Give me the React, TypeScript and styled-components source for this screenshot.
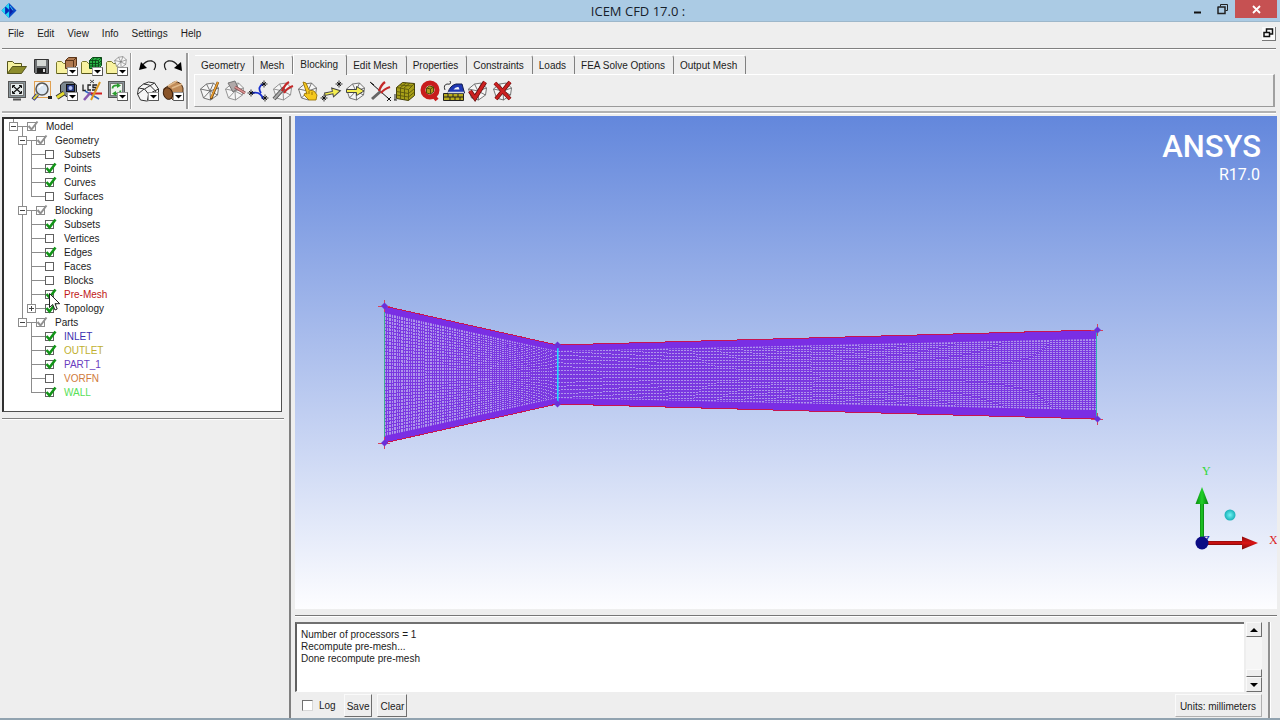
import React from 'react';
import styled, { createGlobalStyle, css } from 'styled-components';

const GlobalStyle = createGlobalStyle`
  *, *::before, *::after { box-sizing: border-box; }
  body {
    margin: 0;
    background: #eeeeee;
    color: #1c1c1c;
    font: 10px/14px "Liberation Sans", Arial, sans-serif;
  }
  button, textarea, input { font: inherit; color: inherit; margin: 0; padding: 0; }
  button { border: 0; background: none; cursor: default; }
  svg { display: block; }
`;

/* ---------- window frame ---------- */

const Window = styled.div`
  min-height: 100vh;
  display: flex;
  flex-direction: column;
  background: #eeeeee;
  border-bottom: 2px solid #91a3b0;
`;

const TitleBar = styled.header`
  height: 22px;
  flex: none;
  display: grid;
  grid-template-columns: 96px 1fr 100px;
  background: #abcbe4;
  border-bottom: 1px solid #9db7ca;
`;

const AppIcon = styled.div`
  padding: 2px 0 0 1px;
`;

const Title = styled.h1`
  margin: 0;
  text-align: center;
  font: 13px/22px "Open Sans", "Noto Sans", sans-serif;
  color: #16202a;
`;

const Caption = styled.div`
  display: flex;
  justify-content: flex-end;
  padding-right: 3px;
`;

const CaptionButton = styled.button<{ $close?: boolean }>`
  width: ${p => (p.$close ? 42 : 25)}px;
  height: 18px;
  display: grid;
  place-items: center;
  background: ${p => (p.$close ? '#c65152' : 'transparent')};
`;

const MenuBar = styled.nav`
  height: 26px;
  flex: none;
  display: flex;
  align-items: center;
  gap: 13px;
  margin: 0 4px 0 2px;
  padding: 0 0 2px 6px;
`;

const MenuButton = styled.button`
  height: 18px;
`;

const RestoreChild = styled.button`
  width: 14px;
  height: 14px;
  margin-left: auto;
  display: grid;
  place-items: center;
  background: #fafafa;
  border-right: 1px solid #777;
  border-bottom: 1px solid #777;
`;

const Rule = styled.hr<{ $soft?: boolean; $flush?: boolean }>`
  height: ${p => (p.$soft ? 3 : 2)}px;
  flex: none;
  margin: ${p => (p.$flush ? '0' : '0 4px 0 2px')};
  border: 0;
  border-top: ${p => (p.$soft ? '2px solid #b2b2b2' : '1px solid #808080')};
  background: #ffffff;
`;

/* ---------- toolbars ---------- */

const ToolArea = styled.div`
  height: 61px;
  flex: none;
  display: flex;
  padding: 3px 5px 2px 5px;
`;

const ToolGroup = styled.div<{ $columns: number }>`
  display: grid;
  grid-template-columns: repeat(${p => p.$columns}, 1fr);
  grid-template-rows: 25px 25px;
  width: ${p => (p.$columns === 5 ? 124 : 50)}px;
`;

const Divider = styled.div<{ $strong?: boolean }>`
  width: ${p => (p.$strong ? 3 : 2)}px;
  margin: 0 ${p => (p.$strong ? 5 : 3)}px 0 1px;
  border-left: ${p => (p.$strong ? 2 : 1)}px solid #9b9b9b;
  background: #ffffff;
`;

const ToolButton = styled.button`
  display: grid;
  place-items: center;
`;

const TabPanel = styled.section`
  flex: 1;
  min-width: 0;
  display: flex;
  flex-direction: column;
  padding-top: 1px;
`;

const TabStrip = styled.div`
  height: 20px;
  display: flex;
  align-items: flex-end;
  padding-left: 1px;
`;

const Tab = styled.button<{ $active?: boolean }>`
  height: ${p => (p.$active ? 21 : 19)}px;
  padding: 1px 8px 0 6px;
  white-space: nowrap;
  line-height: 18px;
  text-align: left;
  background: #eeeeee;
  border-top: 1px solid #ffffff;
  border-right: 1px solid #808080;
  border-top-right-radius: 3px;
  ${p =>
    p.$active &&
    css`
      position: relative;
      top: 1px;
      padding-bottom: 2px;
      line-height: 16px;
      border-left: 1px solid #ffffff;
    `}
`;

const TabPage = styled.div`
  height: 33px;
  border: 1px solid #ffffff;
  border-right: 2px solid #a0a0a0;
  border-bottom-color: #9a9a9a;
  padding: 4px 0 0 3px;
`;

const BlockingTools = styled.div`
  display: grid;
  grid-template-columns: repeat(13, 1fr);
  grid-auto-rows: 24px;
  width: 317px;
`;

/* ---------- model tree ---------- */

const Main = styled.main`
  flex: 1;
  display: grid;
  grid-template-columns: 282px 11px 1fr;
  padding: 2px 3px 0 2px;
`;

const LeftColumn = styled.div`
  display: flex;
  flex-direction: column;
`;

const TreePanel = styled.div`
  height: 295px;
  margin: 1px 2px 6px 0;
  padding: 0 0 0 5px;
  background: #ffffff;
  border: 2px solid #303030;
  border-right: 1px solid #505050;
  border-bottom: 1px solid #505050;
`;

const Tree = styled.ul`
  list-style: none;
  margin: 0;
  padding: 0;
`;

const TreeRow = styled.li`
  position: relative;
  height: 14px;
  display: flex;
`;

const line = '#8c8c8c';
const Guide = styled.span<{ $lines: string }>`
  position: relative;
  width: 9px;
  height: 14px;
  flex: none;
  ${p => {
    const l: string[] = [];
    const paint = (pos: string) => l.push(`linear-gradient(${line}, ${line}) ${pos} no-repeat`);
    if (p.$lines.includes('u')) paint('4px 0 / 1px 8px');
    if (p.$lines.includes('d')) paint('4px 7px / 1px 7px');
    if (p.$lines.includes('l')) paint('0 7px / 5px 1px');
    if (p.$lines.includes('r')) paint('4px 7px / 5px 1px');
    return l.length ? `background: ${l.join(', ')};` : '';
  }}
`;

const Expander = styled.button`
  position: absolute;
  left: 0;
  top: 3px;
  width: 9px;
  height: 9px;
  background: #ffffff;
  border: 1px solid ${line};
`;

const CheckBox = styled.input<{ $muted?: boolean }>`
  appearance: none;
  display: block;
  width: 9px;
  height: 9px;
  margin: 3px 0 0;
  background: #ffffff;
  border: 1px solid ${p => (p.$muted ? '#8c8c8c' : '#606060')};
`;

const Tick = styled.svg`
  position: absolute;
  left: 0;
  top: 0;
  pointer-events: none;
`;

const TreeLabel = styled.label<{ $color?: string }>`
  margin-left: 10px;
  white-space: nowrap;
  line-height: 16px;
  color: ${p => p.$color || '#1c1c1c'};
`;

const Pointer = styled.svg`
  position: absolute;
  left: 40px;
  top: 6px;
  z-index: 2;
`;

const Sash = styled.div`
  border-left: 2px solid #808080;
  margin-left: 5px;
`;

/* ---------- graphics and messages ---------- */

const RightColumn = styled.div`
  display: flex;
  flex-direction: column;
  min-width: 0;
`;

const Viewport = styled.section`
  position: relative;
  flex: 1;
  min-height: 320px;
  background: linear-gradient(#6387dc, #fdfdff);
`;

const MeshDrawing = styled.svg`
  position: absolute;
  inset: 0;
  width: 100%;
  height: 100%;
`;

const Brand = styled.div`
  position: absolute;
  top: 13px;
  right: 16px;
  text-align: right;
  color: #ffffff;
`;

const BrandName = styled.div`
  font: 500 31px/36px Roboto, "Liberation Sans", sans-serif;
`;

const BrandRelease = styled.div`
  font: 16px/19px Roboto, "Liberation Sans", sans-serif;
  padding-right: 1px;
`;

const Triad = styled.svg`
  position: absolute;
  right: 0;
  bottom: 53px;
`;

const SplitLine = styled.hr`
  height: 2px;
  width: 100%;
  margin: 6px 0 5px;
  border: 0;
  border-top: 1px solid #777777;
  background: #ffffff;
`;

const Messages = styled.section`
  flex: none;
  display: flex;
  padding-right: 6px;
`;

const MessageBody = styled.div`
  flex: 1;
  min-width: 0;
  padding-right: 6px;
`;

const MessageRow = styled.div`
  display: flex;
  gap: 2px;
  height: 70px;
`;

const MessageText = styled.textarea`
  flex: 1;
  min-width: 0;
  resize: none;
  overflow: hidden;
  outline: none;
  border: 0;
  border-top: 2px solid #707070;
  border-left: 2px solid #606060;
  border-bottom: 1px solid #ffffff;
  background: #ffffff;
  padding: 5px 4px 0;
  line-height: 12px;
`;

const ScrollBar = styled.div`
  width: 16px;
  display: flex;
  flex-direction: column;
  background: #f5f5f5;
`;

const raised = css`
  background: #eeeeee;
  border: 1px solid #fafafa;
  border-right-color: #6e6e6e;
  border-bottom-color: #6e6e6e;
`;

const ScrollButton = styled.button`
  ${raised}
  height: 15px;
  display: grid;
  place-items: center;
`;

const ScrollThumb = styled.div`
  ${raised}
  height: 8px;
  margin-top: auto;
`;

const Controls = styled.div`
  height: 26px;
  display: flex;
  align-items: stretch;
  gap: 5px;
  padding: 2px 0 1px 7px;
`;

const LogLabel = styled.label`
  display: flex;
  align-items: center;
  gap: 6px;
  margin-right: 3px;
`;

const LogCheck = styled.input`
  appearance: none;
  width: 11px;
  height: 11px;
  background: #ffffff;
  border: 1px solid #d8d8d8;
  border-top-color: #707070;
  border-left-color: #707070;
`;

const PushButton = styled.button<{ $end?: boolean }>`
  ${raised}
  padding: 2px ${p => (p.$end ? 5 : 2)}px 0 ${p => (p.$end ? 4 : 2)}px;
  ${p => p.$end && 'margin-left: auto; border-color: #fafafa #b0b0b0 #b0b0b0 #fafafa;'}
`;

const EdgeBar = styled.div`
  width: 3px;
  border-left: 2px solid #909090;
  background: #ffffff;
`;

/* ---------- icons ---------- */

const Icon = ({ children }: { children: React.ReactNode }) => (
  <svg width="24" height="24" viewBox="0 0 24 24" fill="none" stroke="#222" strokeWidth="1" aria-hidden="true">
    {children}
  </svg>
);

const DropMark = () => (
  <g>
    <rect x="12.5" y="13.5" width="10" height="8" fill="#fff" stroke="#999" />
    <path d="M22.5 13.5v8h-10" stroke="#555" />
    <path d="M14 16h7l-3.500 3.500z" fill="#000" stroke="none" />
  </g>
);

const Folder = () => (
  <g stroke="#55551c">
    <path d="M2.500 19.500v-12h5l2 2h7v3" fill="#f6f2a0" />
    <path d="M2.500 19.500h14l5-7h-14z" fill="#8c8c2c" />
  </g>
);

const OpenFolder = () => (
  <g>
    <path d="M1.500 19.500v-11l1-1h4l2 2h8v10z" fill="#f8f2a0" stroke="#77772c" />
    <path d="M2 19.500h14" stroke="#55551c" />
  </g>
);

const Block = ({ light }: { light?: boolean }) => (
  <g stroke={light ? '#8a8a8a' : '#666'} strokeWidth="0.900">
    <path d="M2.500 10l6-5 7-1 5 5-1 7-7 5-7-2z" fill="#f6f6f6" />
    <path d="M12 12L2.500 10M12 12L8.500 5M12 12l3.500-8M12 12l8.500-3M12 12l7.500 4M12 12l.5 9M12 12l-6.500 7" />
  </g>
);

const Star = ({ x, y }: { x: number; y: number }) => (
  <g stroke="#000">
    <path d={`M${x - 3.5} ${y}h7M${x} ${y - 3.5}v7M${x - 2} ${y - 2}l4 4M${x + 2} ${y - 2}l-4 4`} strokeWidth="0.8" />
  </g>
);

const fileTools: [string, React.ReactNode][] = [
  ['Open project', <Folder />],
  ['Save project', (
    <g>
      <path d="M4.500 5.500h14v14h-13l-1-1z" fill="#6f7274" stroke="#333" />
      <rect x="7" y="6" width="9" height="6" fill="#d4d8d4" stroke="none" />
      <rect x="7" y="14" width="9" height="5" fill="#1c1c1c" stroke="none" />
      <rect x="13" y="15" width="2" height="3" fill="#ddd" stroke="none" />
    </g>
  )],
  ['Open geometry', (
    <g>
      <OpenFolder />
      <path d="M10.500 6.500l3-3h8v8l-3 3h-8z" fill="#b07a50" stroke="#5b3519" />
      <path d="M10.500 6.500h8v8M18.500 6.500l3-3" stroke="#5b3519" />
      <DropMark />
    </g>
  )],
  ['Open mesh', (
    <g>
      <OpenFolder />
      <path d="M9.500 6.500l3-3h9v8l-3 3h-9z" fill="#29b245" stroke="#0c4a18" />
      <path d="M9.500 6.500h9v8M18.500 6.500l3-3M12.500 6v9M15.500 6v9M9.500 9.500h9l3-3M9.500 12h9l3-3M14 3.500l-2 3M18 3.500l-3 3" stroke="#0c4a18" strokeWidth="0.900" />
      <DropMark />
    </g>
  )],
  ['Open blocking', (
    <g>
      <OpenFolder />
      <g transform="translate(8 0) scale(.65)"><Block /></g>
      <DropMark />
    </g>
  )],
  ['Fit window', (
    <g>
      <rect x="3.500" y="2.500" width="17" height="16" fill="#8b979c" stroke="#555" />
      <rect x="5.500" y="4.500" width="13" height="12" fill="#e8eeee" stroke="#777" />
      <path d="M8 7l8 7M16 7l-8 7" stroke="#111" strokeWidth="1.100" />
      <path d="M7.500 9V6.500H10M14 6.500h2.500V9M16.500 12v2.500H14M10 14.500H7.500V12" stroke="#111" />
      <path d="M8 20.500h8" stroke="#555" strokeWidth="2" />
    </g>
  )],
  ['Box zoom', (
    <g>
      <rect x="4.500" y="2.500" width="16" height="16" stroke="#e0a050" />
      <path d="M7.500 15.500L3 20.500" stroke="#303080" strokeWidth="4" />
      <path d="M7.500 15.500L3.500 20" stroke="#d8d040" strokeWidth="2" />
      <circle cx="12" cy="10" r="6" fill="#dbe6f2" stroke="#555" strokeWidth="1.500" />
      <path d="M9 9q1-3 4-3" stroke="#fff" strokeWidth="1.500" />
      <rect x="18" y="17" width="4" height="3" fill="#222" stroke="none" />
    </g>
  )],
  ['Measure distance', (
    <g>
      <path d="M5.500 13V6l3-3h9l4 3v11l-8 2z" fill="#7c8890" stroke="#222" />
      <rect x="11.500" y="5.500" width="8" height="7" fill="#26387c" stroke="#111" />
      <circle cx="15.500" cy="9" r="2" fill="#b8c4f4" stroke="none" />
      <path d="M2 18.500l7-4.500" stroke="#333" strokeWidth="5" />
      <path d="M2 18.500l7-4.500" stroke="#e4dc30" strokeWidth="3" />
      <DropMark />
    </g>
  )],
  ['Local coordinate systems', (
    <g>
      <path d="M3 5.500v6h3M11 6h-3v5h3M17 6h-4v2.500h3V11h-4" stroke="#222" strokeWidth="1.300" />
      <path d="M10 1l4 3M14 1l-4 3" stroke="#222" strokeWidth="0.800" />
      <path d="M5 12l14 8" stroke="#3366c0" strokeWidth="1.500" />
      <path d="M4 21L11 13" stroke="#8858b0" strokeWidth="2.500" />
      <path d="M11 14.500h11" stroke="#d02020" strokeWidth="2" />
      <path d="M11 21L20 3" stroke="#dc9820" strokeWidth="2" />
    </g>
  )],
  ['Refresh', (
    <g>
      <rect x="3.500" y="2.500" width="16" height="16" fill="#8b979c" stroke="#555" />
      <rect x="5.500" y="4.500" width="12" height="12" fill="#eef4ee" stroke="#777" />
      <path d="M7.500 9.500q0-3.500 5-3" stroke="#2c9d30" strokeWidth="1.800" />
      <path d="M12 4l4 2.500-4 2.500z" fill="#2c9d30" stroke="none" />
      <path d="M15.500 11.500q0 3.500-5 3" stroke="#2c9d30" strokeWidth="1.800" />
      <path d="M11 12l-4 2.500L11 17z" fill="#2c9d30" stroke="none" />
      <DropMark />
    </g>
  )],
];

const editTools: [string, React.ReactNode][] = [
  ['Undo', (
    <g>
      <path d="M6 12q4-6 10-5 6 2 2 9" stroke="#222" strokeWidth="1.300" />
      <path d="M3 16l2-8 6 6z" fill="#000" stroke="none" />
    </g>
  )],
  ['Redo', (
    <g>
      <path d="M17 12q-4-6-10-5-6 2-2 9" stroke="#222" strokeWidth="1.300" />
      <path d="M21 17l-1-9-7 6z" fill="#000" stroke="none" />
    </g>
  )],
  ['Wireframe display', (
    <g stroke="#333">
      <path d="M1.500 15l1-6 5-4 5-2 6 1 4 6v5l-7 6-5 1-6-1z" fill="#f6f6f6" />
      <path d="M2.500 9l6 1 4 5-1 6M7.500 5l6 1 6 6 1 3M12.500 15l10-5M8.500 10l10-6M2 15l6-5" />
      <DropMark />
    </g>
  )],
  ['Solid display', (
    <g>
      <path d="M2.500 10L13 3q7-1 9 6v4l-10 8z" fill="#c08b58" stroke="#4a2b12" />
      <path d="M7 7l9-5M11 9l10-4" stroke="#e2bb8c" strokeWidth="1.500" />
      <ellipse cx="7" cy="14.500" rx="4.500" ry="6" fill="#8a5428" stroke="#3c200c" transform="rotate(-20 7 14.500)" />
      <DropMark />
    </g>
  )],
];

const blockingTools: [string, React.ReactNode][] = [
  ['Create block', (
    <g><Block /><path d="M20 3l-7 17" stroke="#6a4210" strokeWidth="2.500" /><path d="M20 3l-7 16" stroke="#eea030" strokeWidth="1.500" /></g>
  )],
  ['Split block', (
    <g><Block light /><path d="M5 4l7-2 3 7-5 4z" fill="#b0a8a8" stroke="#777" /><path d="M12 8l10 6" stroke="#7c4444" strokeWidth="3" /><path d="M12 8l10 6" stroke="#d89090" strokeWidth="1.500" /></g>
  )],
  ['Merge vertices', (
    <g><path d="M5 14q9-2 11 6M16 5q-6 3-2 9" stroke="#1830d0" strokeWidth="1.800" /><Star x={17} y={5} /><Star x={4} y={14} /><Star x={18} y={19} /></g>
  )],
  ['Edit block', (
    <g><Block light /><path d="M3 20L13 9" stroke="#555" strokeWidth="4" /><path d="M3 20L13 9" stroke="#aaa" strokeWidth="2" /><path d="M11 12q3-7 7-9M13 14q3-5 9-7" stroke="#c42828" strokeWidth="2.300" /></g>
  )],
  ['Associate', (
    <g><Block /><path d="M7 3l3 1 3 7 5 1 3 4-1 5h-7l-5-5 1-2 2 1z" fill="#f5c81e" stroke="#9a7408" strokeWidth="0.900" /><path d="M13 12v3M16 13v3" stroke="#9a7408" /></g>
  )],
  ['Move vertex', (
    <g><path d="M4.500 12.500h8V9l8 4.500-8 4.500v-3h-8z" transform="rotate(-12 12 13)" fill="#f4ee50" stroke="#444" /><Star x={19} y={5} /><Star x={4} y={19} /></g>
  )],
  ['Transform blocks', (
    <g><Block /><path d="M2.500 10.500h10V7.500l7.500 4.500-7.500 4.500v-3h-10z" fill="#f4ee50" stroke="#444" /></g>
  )],
  ['Edit edge', (
    <g><path d="M2 4l18 16" stroke="#111" /><path d="M3 20l9-8" stroke="#666" strokeWidth="3" /><path d="M10 12q2-6 6-9M12 14q3-4 9-6" stroke="#c42828" strokeWidth="2.300" /><path d="M18 18l4 4M22 18l-4 4M1 3l4 3" stroke="#111" /></g>
  )],
  ['Pre-mesh parameters', (
    <g><path d="M3.500 8.500l6-5 12 1v12l-6 5-12-2z" fill="#a8a018" stroke="#44400a" /><path d="M3.500 8.500l12 2v11M15.500 10.500l6-6M7.500 9v11M11.500 10v11M3.500 12.500l12 2 6-5M3.500 16l12 2 6-5M7 6l12 1M13 4l-6 5M17 4l-6 5" stroke="#5c580c" strokeWidth="0.900" /><path d="M2 15v6M1 21h3" stroke="#222" /></g>
  )],
  ['Pre-mesh quality', (
    <g><circle cx="12" cy="11" r="7" stroke="#c81c1c" strokeWidth="5" /><path d="M14 15l5 6" stroke="#c81c1c" strokeWidth="4" /><path d="M8.500 9l3-2 4 1v5l-3 2-4-1z" fill="#b09c20" stroke="#514b08" /><path d="M8.500 9l4 1v5M12.500 10l3-2" stroke="#514b08" /></g>
  )],
  ['Pre-mesh smooth', (
    <g><path d="M1.500 14.500h20v7h-20z" fill="#b8ac1c" stroke="#222" /><path d="M2 18h20M6 15v3M11 15v3M16 15v3M8 18v3M13 18v3M18 18v3" stroke="#222" /><path d="M6 13.500q2-7 8-8.500h6l2.500 9H7z" fill="#1f38b4" stroke="#111c50" /><path d="M11.500 10.500q2-3 5-2.500l1 2.500z" fill="#f0f2fa" stroke="none" /><path d="M3 11q-2-5 2-6 5 1 3-3" stroke="#333" /><path d="M6 13.500h16" stroke="#d4d8e0" strokeWidth="1.500" /></g>
  )],
  ['Block checks', (
    <g><Block /><path d="M4 12l5 7L19 3" stroke="#621010" strokeWidth="4.500" /><path d="M4 12l5 7L19 3" stroke="#cc2020" strokeWidth="3" /></g>
  )],
  ['Delete block', (
    <g><Block /><path d="M4 4l15 16M19 3L5 20" stroke="#6b1212" strokeWidth="4" /><path d="M4 4l15 16M19 3L5 20" stroke="#cc2020" strokeWidth="2.600" /></g>
  )],
];

const tabs = ['Geometry', 'Mesh', 'Blocking', 'Edit Mesh', 'Properties', 'Constraints', 'Loads', 'FEA Solve Options', 'Output Mesh'];

/* ---------- tree data ---------- */

type Leaf = { name: string; on: boolean; color?: string; expandable?: boolean; pointer?: boolean };
const groups: { name: string; items: Leaf[] }[] = [
  { name: 'Geometry', items: [
    { name: 'Subsets', on: false }, { name: 'Points', on: true },
    { name: 'Curves', on: true }, { name: 'Surfaces', on: false },
  ] },
  { name: 'Blocking', items: [
    { name: 'Subsets', on: true }, { name: 'Vertices', on: false }, { name: 'Edges', on: true },
    { name: 'Faces', on: false }, { name: 'Blocks', on: false },
    { name: 'Pre-Mesh', on: true, color: '#c01818', pointer: true },
    { name: 'Topology', on: true, expandable: true },
  ] },
  { name: 'Parts', items: [
    { name: 'INLET', on: true, color: '#3a2fb0' }, { name: 'OUTLET', on: true, color: '#c0b030' },
    { name: 'PART_1', on: true, color: '#6a3cc0' }, { name: 'VORFN', on: false, color: '#d07a3c' },
    { name: 'WALL', on: true, color: '#58e058' },
  ] },
];

const Check = ({ id, on, muted }: { id: string; on: boolean; muted?: boolean }) => (
  <Guide $lines="">
    <CheckBox type="checkbox" id={id} defaultChecked={on} $muted={muted} />
    {on && (
      <Tick width="12" height="14" viewBox="0 0 12 14" fill="none">
        <path d="M1.500 7L4.500 10.500L10.500 2.500" stroke={muted ? '#909090' : '#129418'} strokeWidth={muted ? 2 : 2.6} />
      </Tick>
    )}
  </Guide>
);

const Toggle = ({ open, name, lines }: { open: boolean; name: string; lines: string }) => (
  <Guide $lines={lines}>
    <Expander aria-label={`${open ? 'Collapse' : 'Expand'} ${name}`}>
      <svg width="7" height="7" viewBox="0 0 7 7" stroke="#444">
        <path d={open ? 'M1 3.500h5' : 'M1 3.500h5M3.500 1v5'} />
      </svg>
    </Expander>
  </Guide>
);

const ModelTree = () => (
  <Tree>
    <TreeRow>
      <Toggle open name="Model" lines="u" />
      <Guide $lines="lrd" />
      <Check id="model" on muted />
      <TreeLabel htmlFor="model">Model</TreeLabel>
    </TreeRow>
    {groups.map((g, gi) => {
      const lastGroup = gi === groups.length - 1;
      return (
        <React.Fragment key={g.name}>
          <TreeRow>
            <Guide $lines="" />
            <Toggle open name={g.name} lines={lastGroup ? 'u' : 'ud'} />
            <Guide $lines="lrd" />
            <Check id={g.name} on muted />
            <TreeLabel htmlFor={g.name}>{g.name}</TreeLabel>
          </TreeRow>
          {g.items.map((it, i) => {
            const last = i === g.items.length - 1;
            const id = `${g.name}-${it.name}`;
            return (
              <TreeRow key={id}>
                <Guide $lines="" />
                <Guide $lines={lastGroup ? '' : 'ud'} />
                {it.expandable
                  ? <Toggle open={false} name={it.name} lines="u" />
                  : <Guide $lines={last ? 'ur' : 'udr'} />}
                <Guide $lines="lr" />
                <Check id={id} on={it.on} />
                <TreeLabel htmlFor={id} $color={it.color}>{it.name}</TreeLabel>
                {it.pointer && (
                  <Pointer width="12" height="19" viewBox="0 0 12 19">
                    <path d="M.5 .5v14l3.200-3 2.300 5.500 2.200-1L6 10.700h4.700z" fill="#fff" stroke="#222" />
                  </Pointer>
                )}
              </TreeRow>
            );
          })}
        </React.Fragment>
      );
    })}
  </Tree>
);

/* ---------- mesh ---------- */

const X0 = 89, X1 = 262, X2 = 802;
const lerp = (a: number, b: number, t: number) => a + (b - a) * t;
const topAt = (x: number) => (x < X1 ? lerp(190, 229, (x - X0) / (X1 - X0)) : lerp(229, 214, (x - X1) / (X2 - X1)));
const bottomAt = (x: number) => (x < X1 ? lerp(327, 288, (x - X0) / (X1 - X0)) : lerp(288, 303, (x - X1) / (X2 - X1)));
const layerAt = (x: number) => (x < X1 ? lerp(7, 6, (x - X0) / (X1 - X0)) : lerp(6, 9, (x - X1) / (X2 - X1)));

const range = (n: number) => Array.from({ length: n }, (_, i) => i);
const leftColumns = range(72).map(i => X0 + (i * (X1 - X0)) / 72);
const rightColumns = range(180).map(i => X1 + i * 3);
const columnPath = [...leftColumns, ...rightColumns]
  .map(x => `M${x.toFixed(2)} ${topAt(x).toFixed(2)}V${bottomAt(x).toFixed(2)}`)
  .join('');

const ROWS = 34;
const rowPath = range(ROWS)
  .map(i => {
    const t = (i + 1) / (ROWS + 1);
    const pts = [X0, X1, X2].map(x => {
      const l = layerAt(x);
      return `${x} ${lerp(topAt(x) + l, bottomAt(x) - l, t).toFixed(2)}`;
    });
    return `M${pts.join('L')}`;
  })
  .join('');

const band = (edge: (x: number) => number, dir: number) =>
  `M${[X0, X1, X2].map(x => `${x} ${edge(x)}`).join('L')}L${[X2, X1, X0]
    .map(x => `${x} ${edge(x) + dir * layerAt(x)}`)
    .join('L')}Z`;
const edgeLine = (edge: (x: number) => number) => `M${[X0, X1, X2].map(x => `${x} ${edge(x)}`).join('L')}`;

const corners: [number, number, boolean][] = [
  [X0, 190, true], [X0, 327, true], [X1, 229, false], [X1, 288, false], [X2, 214, true], [X2, 303, true],
];

const Mesh = () => (
  <MeshDrawing viewBox="0 0 982 490" preserveAspectRatio="xMidYMin meet" fill="none" role="img" aria-label="Nozzle pre-mesh">
    <path d={`M${X0} 190L${X1} 229L${X2} 214V303L${X1} 288L${X0} 327Z`} fill="#ae94ec" />
    <g shapeRendering="crispEdges">
      <path d={columnPath} stroke="#7a38e0" />
      <path d={rowPath} stroke="#7a38e0" />
    </g>
    <path d={band(topAt, 1)} fill="#7a2ee4" />
    <path d={band(bottomAt, -1)} fill="#7a2ee4" />
    <g shapeRendering="crispEdges">
      <path d={edgeLine(topAt)} stroke="#c81450" />
      <path d={edgeLine(bottomAt)} stroke="#c81450" />
      <path d={`M${X0 + 0.5} 192V325`} stroke="#3fae90" />
      <path d={`M${X2 - 0.5} 216V301`} stroke="#2fb4b4" />
    </g>
    <rect x={X1} y="232" width="1.600" height="54" fill="#20d4ff" />
    {corners.map(([x, y, cross]) => (
      <g key={`${x}-${y}`}>
        {cross && <path d={`M${x - 6} ${y + 0.5}h12M${x + 0.5} ${y - 6}v12`} stroke="#d8405c" />}
        <path d={`M${x - 3} ${y}l3.500-3.500 3.500 3.500-3.500 3.500z`} fill="#6a30d8" />
      </g>
    ))}
  </MeshDrawing>
);

export default function App() {
  return (
    <>
      <GlobalStyle />
      <Window>
        <TitleBar>
          <AppIcon>
            <svg width="17" height="17" viewBox="0 0 17 17">
              <path d="M8 1l7.500 7.500L8 16 .5 8.500z" fill="#0a48c8" />
              <path d="M8 1v6.500L4.500 4.500zM.5 8.500L4 5v7zM8 16V9.500L4.500 12.500z" fill="#20d8f4" />
              <path d="M9 4.500l4 4-4 4z" fill="#0c20a8" />
              <path d="M4.500 5l3.500 3.500L4.500 12z" fill="#0828b0" />
              <path d="M9 4l3 4.500" stroke="#2cc4f4" />
            </svg>
          </AppIcon>
          <Title>ICEM CFD 17.0 :</Title>
          <Caption>
            <CaptionButton aria-label="Minimize">
              <svg width="11" height="11"><path d="M2 8.500h7" stroke="#111" strokeWidth="2" /></svg>
            </CaptionButton>
            <CaptionButton aria-label="Restore">
              <svg width="11" height="11" fill="none" stroke="#222"><path d="M3.500 2.500v-2h7v6h-2" /><path d="M.5 3h7.500v6.500H1V3" strokeWidth="1.500" /></svg>
            </CaptionButton>
            <CaptionButton $close aria-label="Close">
              <svg width="9" height="9"><path d="M1 1l7 7M8 1L1 8" stroke="#fff" strokeWidth="1.800" /></svg>
            </CaptionButton>
          </Caption>
        </TitleBar>

        <MenuBar>
          {['File', 'Edit', 'View', 'Info', 'Settings', 'Help'].map(m => <MenuButton key={m}>{m}</MenuButton>)}
          <RestoreChild aria-label="Restore child window">
            <svg width="11" height="11" fill="none" stroke="#111"><path d="M3.500 4V1h6v5H7" strokeWidth="1.500" /><path d="M1 4.500h5.500v4H1z" strokeWidth="1.500" /></svg>
          </RestoreChild>
        </MenuBar>
        <Rule />

        <ToolArea>
          <ToolGroup $columns={5}>
            {fileTools.map(([name, art]) => <ToolButton key={name} aria-label={name}><Icon>{art}</Icon></ToolButton>)}
          </ToolGroup>
          <Divider />
          <ToolGroup $columns={2}>
            {editTools.map(([name, art]) => <ToolButton key={name} aria-label={name}><Icon>{art}</Icon></ToolButton>)}
          </ToolGroup>
          <Divider $strong />
          <TabPanel>
            <TabStrip role="tablist">
              {tabs.map(t => (
                <Tab key={t} role="tab" aria-selected={t === 'Blocking'} $active={t === 'Blocking'}>{t}</Tab>
              ))}
            </TabStrip>
            <TabPage role="tabpanel">
              <BlockingTools>
                {blockingTools.map(([name, art]) => <ToolButton key={name} aria-label={name}><Icon>{art}</Icon></ToolButton>)}
              </BlockingTools>
            </TabPage>
          </TabPanel>
        </ToolArea>
        <Rule $soft />

        <Main>
          <LeftColumn>
            <TreePanel><ModelTree /></TreePanel>
            <Rule $flush />
          </LeftColumn>
          <Sash />
          <RightColumn>
            <Viewport>
              <Mesh />
              <Brand>
                <BrandName>ANSYS</BrandName>
                <BrandRelease>R17.0</BrandRelease>
              </Brand>
              <Triad width="92" height="96" viewBox="0 0 92 96" fontFamily="Liberation Serif, serif" fontSize="12">
                <defs>
                  <linearGradient id="green" x1="0" x2="1"><stop stopColor="#0a8c10" /><stop offset=".5" stopColor="#20d028" /><stop offset="1" stopColor="#087810" /></linearGradient>
                  <linearGradient id="red" x1="0" x2="0" y1="0" y2="1"><stop stopColor="#8c0a0a" /><stop offset=".5" stopColor="#dc1414" /><stop offset="1" stopColor="#780808" /></linearGradient>
                  <radialGradient id="cyan"><stop stopColor="#70f4f4" /><stop offset="1" stopColor="#18b0b8" /></radialGradient>
                </defs>
                <text x="17" y="15" fill="#30d838">Y</text>
                <text x="84" y="84" fill="#dc2424">X</text>
                <text x="18" y="84" fill="#2828b0">Z</text>
                <rect x="15" y="42" width="4" height="40" fill="url(#green)" />
                <path d="M17 27l6.500 17h-13z" fill="url(#green)" />
                <rect x="20" y="81" width="38" height="4" fill="url(#red)" />
                <path d="M73 83l-16 6.500v-13z" fill="url(#red)" />
                <circle cx="17" cy="83" r="6.500" fill="#0c0c84" />
                <circle cx="45" cy="55" r="5.500" fill="url(#cyan)" />
              </Triad>
            </Viewport>
            <SplitLine />
            <Messages>
              <MessageBody>
                <MessageRow>
                  <MessageText
                    readOnly
                    aria-label="Messages"
                    defaultValue={'Number of processors = 1\nRecompute pre-mesh...\nDone recompute pre-mesh'}
                  />
                  <ScrollBar>
                    <ScrollButton aria-label="Scroll up"><svg width="8" height="4"><path d="M0 4l4-4 4 4z" /></svg></ScrollButton>
                    <ScrollThumb />
                    <ScrollButton aria-label="Scroll down"><svg width="8" height="4"><path d="M0 0h8L4 4z" /></svg></ScrollButton>
                  </ScrollBar>
                </MessageRow>
                <Controls>
                  <LogLabel><LogCheck type="checkbox" />Log</LogLabel>
                  <PushButton>Save</PushButton>
                  <PushButton>Clear</PushButton>
                  <PushButton $end>Units: millimeters</PushButton>
                </Controls>
              </MessageBody>
              <EdgeBar />
            </Messages>
          </RightColumn>
        </Main>
      </Window>
    </>
  );
}
